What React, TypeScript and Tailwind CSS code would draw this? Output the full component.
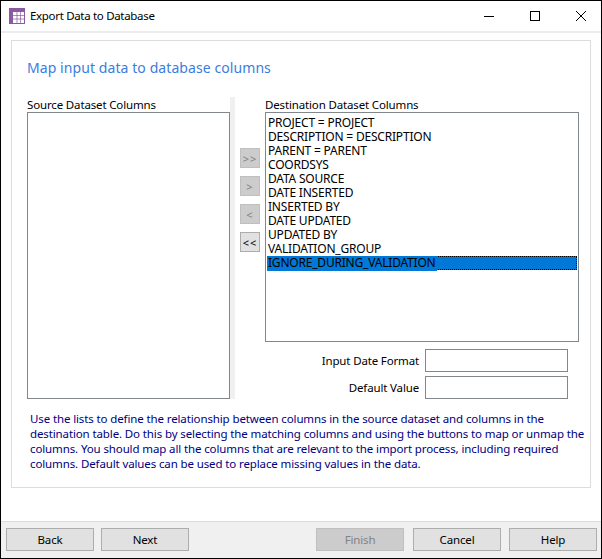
const font = "[font-family:'Noto_Sans','Open_Sans',sans-serif]";

const dest = [
  "PROJECT = PROJECT",
  "DESCRIPTION = DESCRIPTION",
  "PARENT = PARENT",
  "COORDSYS",
  "DATA SOURCE",
  "DATE INSERTED",
  "INSERTED BY",
  "DATE UPDATED",
  "UPDATED BY",
  "VALIDATION_GROUP",
];

function Arrow({ label, enabled }: { label: string; enabled?: boolean }) {
  return (
    <button
      className={
        "w-[20px] h-[20px] border flex items-center justify-center text-[11px] leading-none tracking-[1px] " +
        (enabled
          ? "bg-[#e1e1e1] border-[#adadad] text-black"
          : "bg-[#cccccc] border-[#bfbfbf] text-[#838383]")
      }
    >
      {label}
    </button>
  );
}

function FootBtn({ label, disabled, className }: { label: string; disabled?: boolean; className?: string }) {
  return (
    <button
      className={
        "w-[88px] h-[23px] border leading-none flex items-center justify-center " +
        (disabled
          ? "bg-[#cccccc] border-[#bfbfbf] text-[#838383] "
          : "bg-[#e1e1e1] border-[#adadad] text-black ") +
        (className ?? "")
      }
    >
      {label}
    </button>
  );
}

export default function App() {
  return (
    <div className={"w-[602px] h-[559px] bg-white border border-black flex flex-col text-[11.5px] tracking-[-0.15px] text-black overflow-hidden " + font}>
      {/* Title bar */}
      <div className="h-[30px] shrink-0 flex items-center pl-[8px] bg-white">
        <svg width="16" height="16" viewBox="0 0 16 16" className="shrink-0">
          <rect x="0" y="0" width="16" height="16" fill="#8a5a9e" />
          <rect x="4" y="4" width="11" height="11" fill="#ffffff" />
          <path d="M4 7.5H15M4 11H15M8 4V15M11.5 4V15" stroke="#8a5a9e" strokeWidth="1" fill="none" opacity="0.7" />
        </svg>
        <span className="ml-[5px] leading-none tracking-[-0.32px]">Export Data to Database</span>
        <div className="ml-auto flex items-center mr-[-3px]">
          <svg width="46" height="30" viewBox="0 0 46 30"><path d="M18 15.5H28" stroke="#000" strokeWidth="1" /></svg>
          <svg width="46" height="30" viewBox="0 0 46 30"><rect x="18.5" y="10.5" width="9" height="9" fill="none" stroke="#000" strokeWidth="1" /></svg>
          <svg width="46" height="30" viewBox="0 0 46 30"><path d="M18 10L28 20M28 10L18 20" stroke="#000" strokeWidth="1" fill="none" /></svg>
        </div>
      </div>
      <div className="h-[2px] shrink-0 bg-[#ececec]" />

      {/* Body */}
      <div className="flex-1 px-[10px] pt-[7px]">
        <div className="h-[448px] border border-[#dcdcdc] pl-[15px] flex flex-col">
          <div className="mt-[17px] h-[20px] text-[14px] tracking-[0.08px] leading-[20px] text-[#3b7ddd]">Map input data to database columns</div>

          <div className="mt-[19px] flex h-[302px]">
            {/* Source */}
            <div className="w-[203px] shrink-0 flex flex-col">
              <div className="h-[15px] leading-[15px]">Source Dataset Columns</div>
              <div className="flex-1 border border-[#82878c] bg-white" />
            </div>
            {/* Splitter */}
            <div className="w-[5px] shrink-0 bg-[#f0f0f0]" />
            {/* Arrows */}
            <div className="w-[30px] shrink-0 pl-[5px] pt-[51px] flex flex-col gap-[8px]">
              <Arrow label=">>" />
              <Arrow label=">" />
              <Arrow label="<" />
              <Arrow label="<<" enabled />
            </div>
            {/* Destination */}
            <div className="w-[314px] shrink-0 flex flex-col">
              <div className="h-[15px] leading-[15px]">Destination Dataset Columns</div>
              <div className="h-[230px] border border-[#82878c] bg-white pl-[1px] pr-[1px] pt-[3px] text-[12px] tracking-[-0.2px]">
                {dest.map((d) => (
                  <div key={d} className="h-[14px] leading-[14px] pl-[1px] whitespace-nowrap">{d}</div>
                ))}
                <div className="relative h-[15px] leading-[14px]">
                  <div className="absolute left-0 right-0 top-0 h-[14px] bg-[#0078d7] border border-dotted border-black" />
                  <span className="relative inline-block bg-[#0078d7] pl-[1px] pr-[1px] h-[15px] whitespace-nowrap">IGNORE_DURING_VALIDATION</span>
                </div>
              </div>
              <div className="mt-[7px] flex items-center justify-end pr-[11px]">
                <span className="mr-[6px]">Input Date Format</span>
                <div className="w-[143px] h-[23px] border border-[#82878c] bg-white" />
              </div>
              <div className="mt-[4px] flex items-center justify-end pr-[11px]">
                <span className="mr-[6px]">Default Value</span>
                <div className="w-[143px] h-[23px] border border-[#82878c] bg-white" />
              </div>
            </div>
          </div>

          <div className="mt-[12px] pl-[3px] leading-[15px] tracking-[-0.12px] text-[#000080] whitespace-nowrap">
            <div>Use the lists to define the relationship between columns in the source dataset and columns in the</div>
            <div>destination table. Do this by selecting the matching columns and using the buttons to map or unmap the</div>
            <div>columns. You should map all the columns that are relevant to the import process, including required</div>
            <div>columns. Default values can be used to replace missing values in the data.</div>
          </div>
        </div>
      </div>

      {/* Footer */}
      <div className="h-[37px] shrink-0 bg-[#f0f0f0] border-t border-[#dcdcdc] flex items-start pt-[6px] pl-[5px]">
        <FootBtn label="Back" />
        <FootBtn label="Next" className="ml-[7px]" />
        <FootBtn label="Finish" disabled className="ml-[127px]" />
        <FootBtn label="Cancel" className="ml-[9px]" />
        <FootBtn label="Help" className="ml-[8px]" />
      </div>
    </div>
  );
}
